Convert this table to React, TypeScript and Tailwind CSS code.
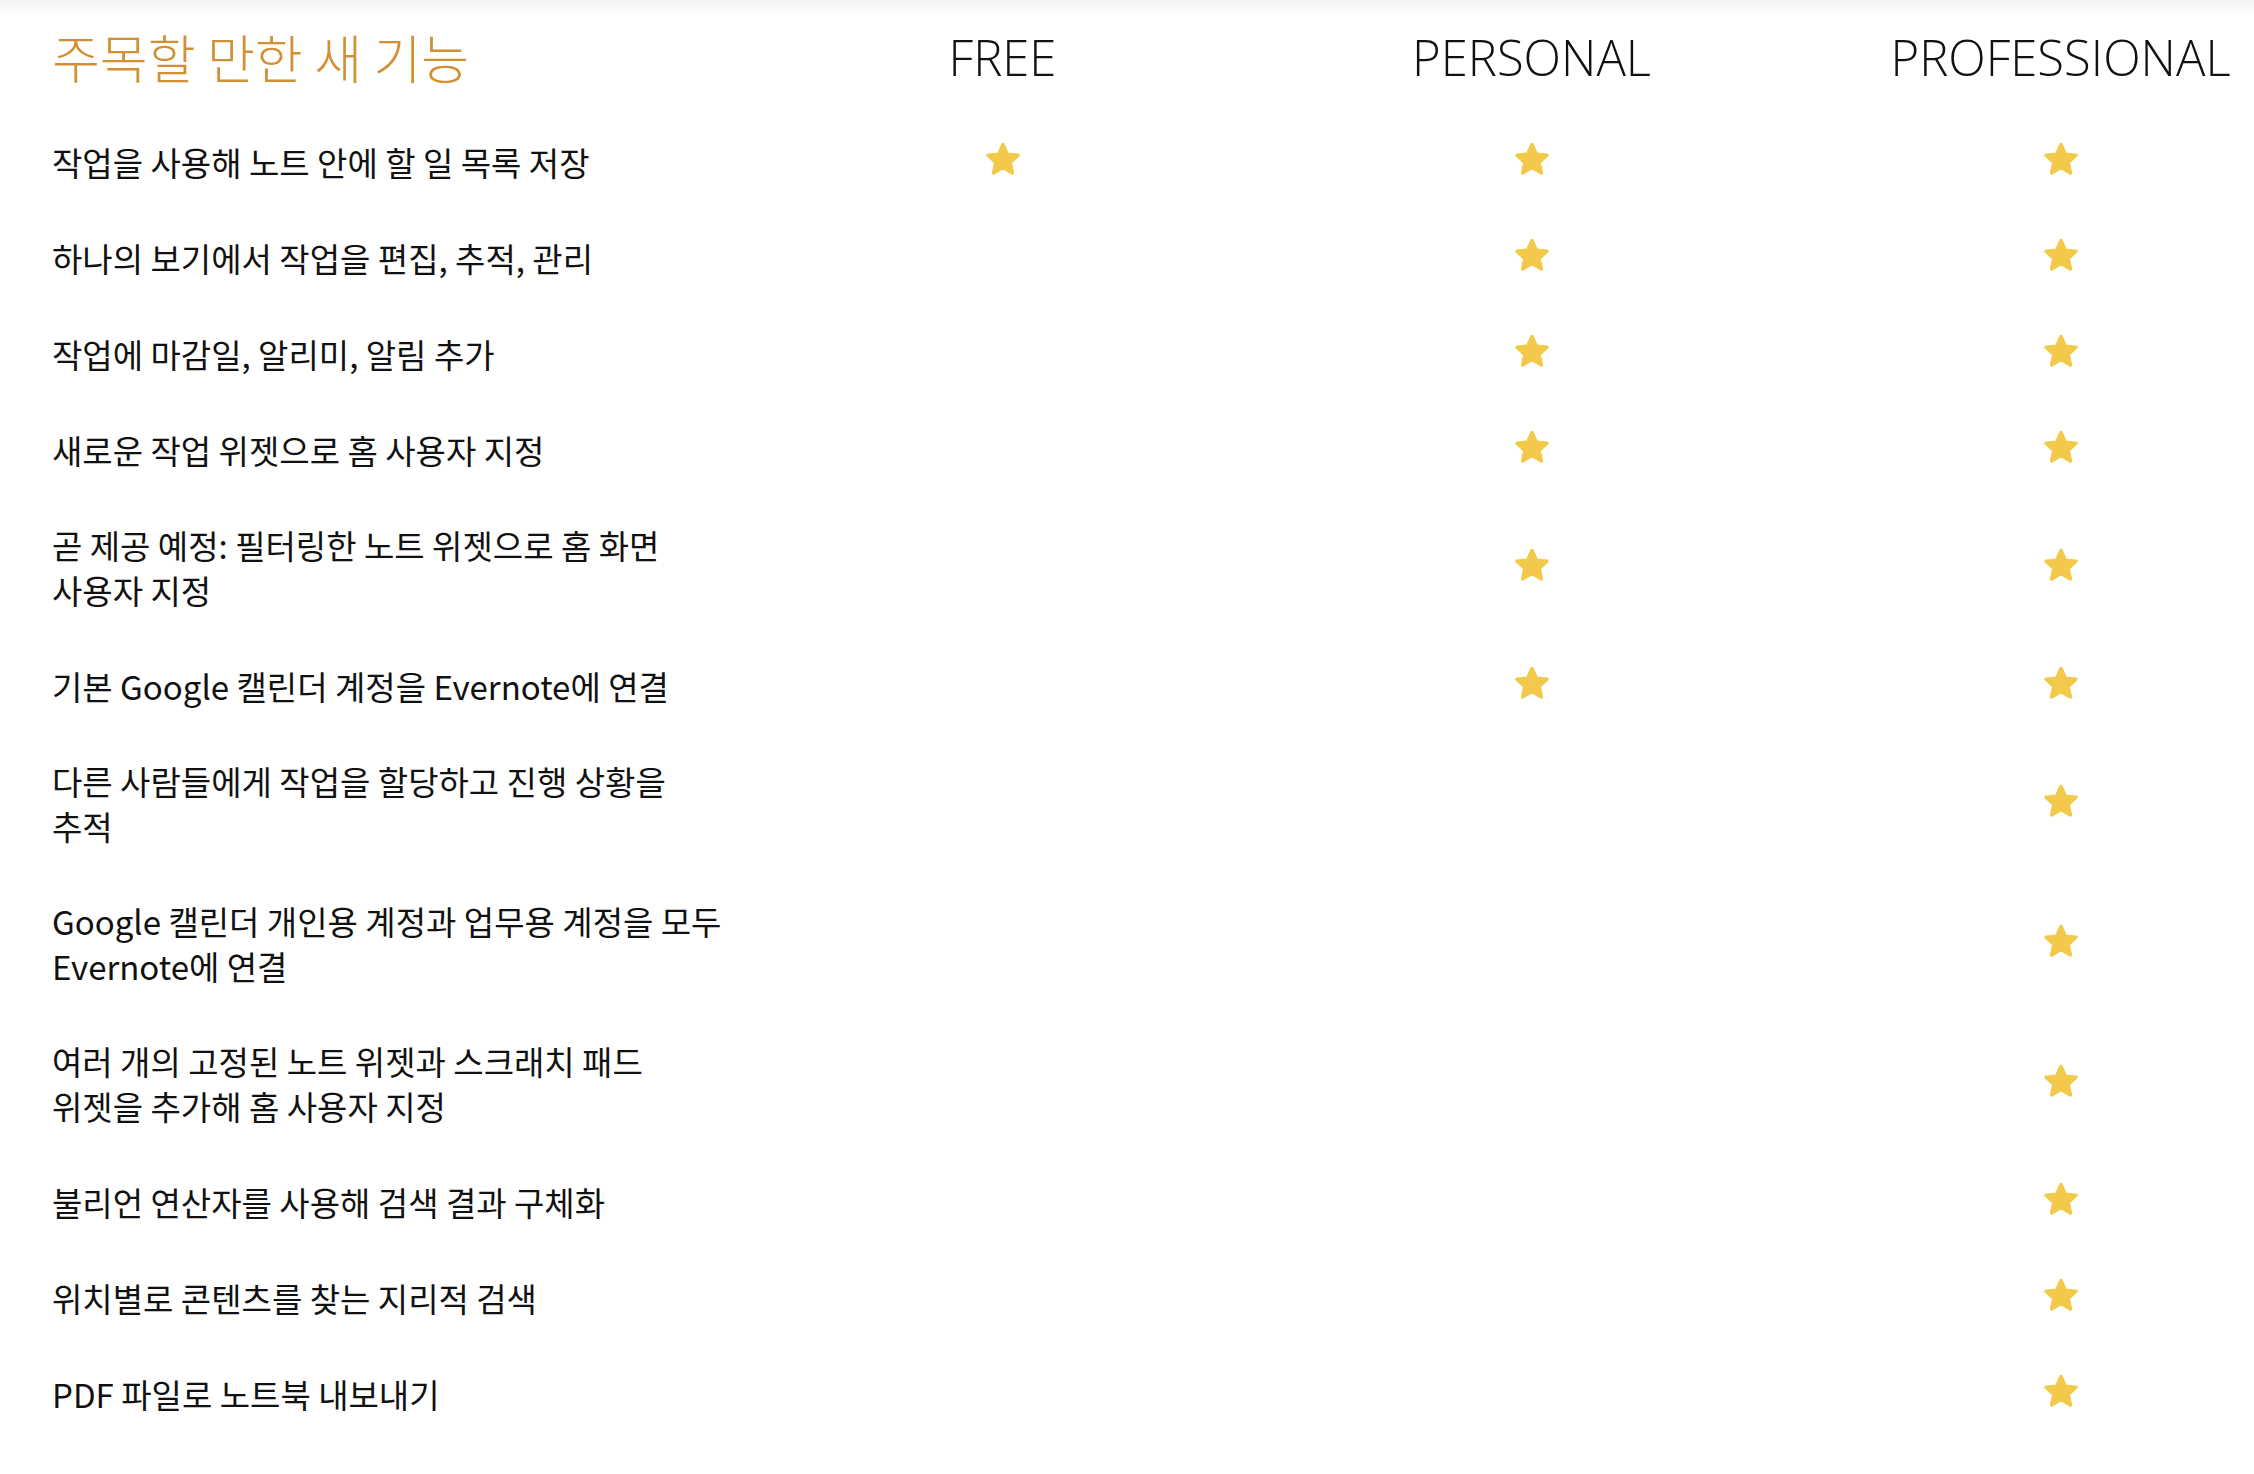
import React from "react"

type Row = { lines: string[]; plans: [boolean, boolean, boolean] }

const rows: Row[] = [
  { lines: ["작업을 사용해 노트 안에 할 일 목록 저장"], plans: [true, true, true] },
  { lines: ["하나의 보기에서 작업을 편집, 추적, 관리"], plans: [false, true, true] },
  { lines: ["작업에 마감일, 알리미, 알림 추가"], plans: [false, true, true] },
  { lines: ["새로운 작업 위젯으로 홈 사용자 지정"], plans: [false, true, true] },
  { lines: ["곧 제공 예정: 필터링한 노트 위젯으로 홈 화면", "사용자 지정"], plans: [false, true, true] },
  { lines: ["기본 Google 캘린더 계정을 Evernote에 연결"], plans: [false, true, true] },
  { lines: ["다른 사람들에게 작업을 할당하고 진행 상황을", "추적"], plans: [false, false, true] },
  { lines: ["Google 캘린더 개인용 계정과 업무용 계정을 모두", "Evernote에 연결"], plans: [false, false, true] },
  { lines: ["여러 개의 고정된 노트 위젯과 스크래치 패드", "위젯을 추가해 홈 사용자 지정"], plans: [false, false, true] },
  { lines: ["불리언 연산자를 사용해 검색 결과 구체화"], plans: [false, false, true] },
  { lines: ["위치별로 콘텐츠를 찾는 지리적 검색"], plans: [false, false, true] },
  { lines: ["PDF 파일로 노트북 내보내기"], plans: [false, false, true] },
]

const plans = ["FREE", "PERSONAL", "PROFESSIONAL"]

function Star() {
  return (
    <svg width="38" height="37" viewBox="0 0 38 37" className="-mt-[6px]">
      <path
        d="M19 3.5 L23.4 13.2 L34 14.3 L26.1 21.4 L28.4 31.9 L19 26.5 L9.6 31.9 L11.9 21.4 L4 14.3 L14.6 13.2 Z"
        fill="#f2c94a"
        stroke="#f2c94a"
        strokeWidth="3.5"
        strokeLinejoin="round"
      />
    </svg>
  )
}

export default function App() {
  return (
    <div className="relative min-h-[1474px] w-full overflow-hidden bg-white text-[#111]"
      style={{ fontFamily: "'Noto Sans CJK KR', 'Noto Sans', sans-serif" }}>
      {/* top shadow */}
      <div className="absolute inset-x-0 top-0 h-[16px] bg-gradient-to-b from-[#f4f4f4] to-white" />

      <div className="relative grid grid-cols-[686px_529px_529px_529px] pl-[52px]">
        {/* header */}
        <div className="flex h-[114px] items-center">
          <h2 className="text-[52px] font-light leading-none text-[#d28f33] whitespace-nowrap">
            주목할 만한 새 기능
          </h2>
        </div>
        {plans.map((p) => (
          <div key={p} className="flex h-[114px] items-center justify-center">
            <span className="text-[49px] font-light leading-none text-[#111]"
              style={{ fontFamily: "'Open Sans', sans-serif" }}>
              {p}
            </span>
          </div>
        ))}

        {/* rows */}
        {rows.map((r, i) => (
          <React.Fragment key={i}>
            <div className="flex min-h-[96px] flex-col justify-center py-[25px] text-[33px] leading-[45px] whitespace-nowrap">
              {r.lines.map((l, j) => (
                <div key={j}>{l}</div>
              ))}
            </div>
            {r.plans.map((on, k) => (
              <div key={k} className="flex items-center justify-center">
                {on && <Star />}
              </div>
            ))}
          </React.Fragment>
        ))}
      </div>
    </div>
  )
}
